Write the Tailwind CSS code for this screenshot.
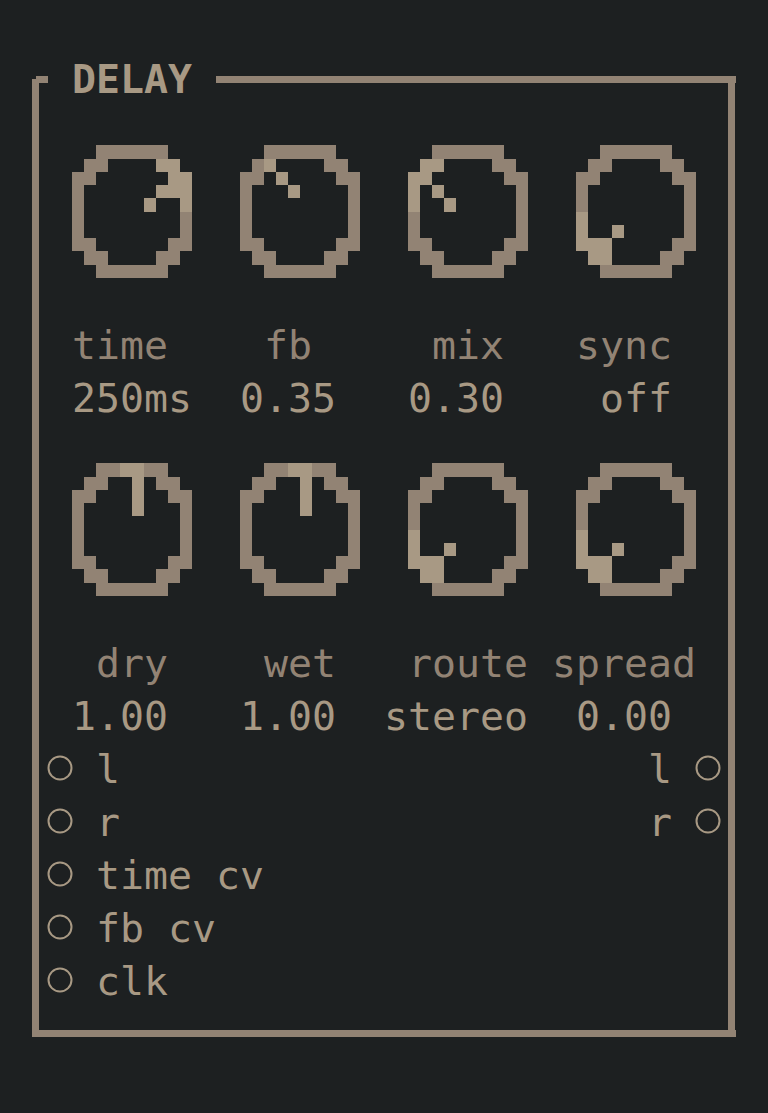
<!DOCTYPE html>
<html lang="en">
  <head>
    <meta charset="UTF-8" />
    <meta name="viewport" content="width=device-width, initial-scale=1" />
    <title>Delay</title>
    <script src="https://cdn.jsdelivr.net/npm/@tailwindcss/browser@4"></script>
  </head>
  <body class="h-[1113px] overflow-hidden bg-[#1d2021] font-['DejaVu_Sans_Mono',monospace] text-[39.87px] leading-[53px] text-[#a89984]">
    <div class="pl-[32px] pt-[53px] w-[736px]">
      <!-- top edge, broken by the title -->
      <div class="flex h-[53px] items-start">
        <div class="w-[4px]"></div>
        <div class="mt-[23px] h-[7px] w-[12px] bg-[#928374]"></div>
        <div class="ml-[24px] w-[120px] font-bold">DELAY</div>
        <div class="ml-[24px] mt-[23px] h-[7px] flex-1 bg-[#928374]"></div>
      </div>
      <div class="-mt-[27px] flex h-[958px] border-l-[7px] border-b-[7px] border-[#928374]">
        <div class="flex-1 pt-[66px]">
          <div class="ml-[33px] grid grid-cols-[120px_120px_120px_120px] gap-x-[48px]">
            <div data-knob="time" class="h-[133px]"></div>
            <div data-knob="fb" class="h-[133px]"></div>
            <div data-knob="mix" class="h-[133px]"></div>
            <div data-knob="off" class="h-[133px]"></div>
          </div>
          <div class="mt-[41px] ml-[33px] grid grid-cols-[120px_120px_120px_120px] gap-x-[48px] text-[#928374] whitespace-pre">
            <div>time</div><div> fb</div><div> mix</div><div>sync</div>
          </div>
          <div class="ml-[33px] grid grid-cols-[120px_120px_120px_120px] gap-x-[48px] whitespace-pre">
            <div>250ms</div><div>0.35</div><div>0.30</div><div> off</div>
          </div>
          <div class="mt-[38px] ml-[33px] grid grid-cols-[120px_120px_120px_120px] gap-x-[48px]">
            <div data-knob="up" class="h-[133px]"></div>
            <div data-knob="up" class="h-[133px]"></div>
            <div data-knob="off" class="h-[133px]"></div>
            <div data-knob="off" class="h-[133px]"></div>
          </div>
          <div class="mt-[41px] ml-[33px] grid grid-cols-[120px_120px_120px_120px] gap-x-[48px] text-[#928374] whitespace-pre">
            <div> dry</div><div> wet</div><div>route</div><div class="-ml-[24px]">spread</div>
          </div>
          <div class="ml-[33px] grid grid-cols-[120px_120px_120px_120px] gap-x-[48px] whitespace-pre">
            <div>1.00</div><div>1.00</div><div class="-ml-[24px]">stereo</div><div>0.00</div>
          </div>
          <div class="flex justify-between pl-[8px] pr-[7px]">
            <div>
              <div class="flex h-[53px] items-start"><svg class="mt-[12px]" width="26" height="26" viewBox="0 0 26 26"><circle cx="13" cy="13" r="11.5" fill="none" stroke="#a89984" stroke-width="2" /></svg><span class="ml-[23px]">l</span></div>
              <div class="flex h-[53px] items-start"><svg class="mt-[12px]" width="26" height="26" viewBox="0 0 26 26"><circle cx="13" cy="13" r="11.5" fill="none" stroke="#a89984" stroke-width="2" /></svg><span class="ml-[23px]">r</span></div>
              <div class="flex h-[53px] items-start"><svg class="mt-[12px]" width="26" height="26" viewBox="0 0 26 26"><circle cx="13" cy="13" r="11.5" fill="none" stroke="#a89984" stroke-width="2" /></svg><span class="ml-[23px]">time cv</span></div>
              <div class="flex h-[53px] items-start"><svg class="mt-[12px]" width="26" height="26" viewBox="0 0 26 26"><circle cx="13" cy="13" r="11.5" fill="none" stroke="#a89984" stroke-width="2" /></svg><span class="ml-[23px]">fb cv</span></div>
              <div class="flex h-[53px] items-start"><svg class="mt-[12px]" width="26" height="26" viewBox="0 0 26 26"><circle cx="13" cy="13" r="11.5" fill="none" stroke="#a89984" stroke-width="2" /></svg><span class="ml-[23px]">clk</span></div>
            </div>
            <div>
              <div class="flex h-[53px] items-start"><span class="mr-[23px]">l</span><svg class="mt-[12px]" width="26" height="26" viewBox="0 0 26 26"><circle cx="13" cy="13" r="11.5" fill="none" stroke="#a89984" stroke-width="2" /></svg></div>
              <div class="flex h-[53px] items-start"><span class="mr-[23px]">r</span><svg class="mt-[12px]" width="26" height="26" viewBox="0 0 26 26"><circle cx="13" cy="13" r="11.5" fill="none" stroke="#a89984" stroke-width="2" /></svg></div>
            </div>
          </div>
        </div>
        <!-- right edge sits 1px inside the top and bottom bars -->
        <div class="w-[7px] bg-[#928374]"></div>
        <div class="w-[1px]"></div>
      </div>
    </div>

    <script>
      // rows snap to the 13.25px character sub-grid
      const rowY = [0, 14, 27, 40, 53, 67, 80, 93, 106, 120, 133];
      const ring = [
        "..######..",
        ".##....##.",
        "##......##",
        "#........#",
        "#........#",
        "#........#",
        "#........#",
        "##......##",
        ".##....##.",
        "..######..",
      ];
      // [row, col] cells drawn in the lighter colour
      const lit = {
        time: [[1,7],[1,8],[2,8],[2,9],[3,7],[3,8],[3,9],[4,6],[4,9]],
        fb: [[1,2],[2,3],[3,4]],
        mix: [[1,1],[1,2],[2,0],[2,1],[3,0],[3,2],[4,0],[4,3]],
        off: [[5,0],[6,0],[6,3],[7,0],[7,1],[7,2],[8,1],[8,2]],
        up: [[0,4],[0,5],[1,5],[2,5],[3,5]],
      };

      function knobSvg(name) {
        const on = new Set(lit[name].map(([r, c]) => r + "," + c));
        let rects = "";
        for (let r = 0; r < 10; r++) {
          for (let c = 0; c < 10; c++) {
            const isLit = on.has(r + "," + c);
            if (ring[r][c] !== "#" && !isLit) continue;
            const fill = isLit ? "#a89984" : "#928374";
            rects += `<rect x="${c * 12}" y="${rowY[r]}" width="12" height="${rowY[r + 1] - rowY[r]}" fill="${fill}" />`;
          }
        }
        return `<svg width="120" height="133" viewBox="0 0 120 133" shape-rendering="crispEdges" class="block">${rects}</svg>`;
      }

      document.querySelectorAll("[data-knob]").forEach((el) => {
        el.innerHTML = knobSvg(el.dataset.knob);
      });
    </script>
  </body>
</html>
